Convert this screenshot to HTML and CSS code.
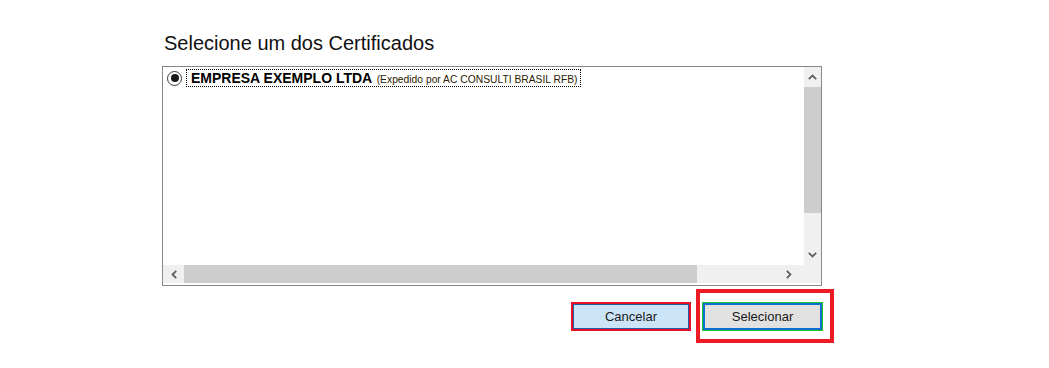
FILE: index.html
```html
<!DOCTYPE html>
<html lang="pt-BR">
<head>
  <meta charset="UTF-8" />
  <title>Certificados</title>
  <link rel="stylesheet" href="styles.css">
</head>
<body>
  <div class="page">
    <h1 class="title">Selecione um dos Certificados</h1>

    <div class="cert-box">
      <div class="cert-list">
        <label class="cert-item">
          <span class="radio"><span class="radio-dot"></span></span>
          <span class="cert-name"><b>EMPRESA EXEMPLO LTDA</b> <small>(Expedido por AC CONSULTI BRASIL RFB)</small></span>
        </label>
      </div>

      <div class="vscroll">
        <div class="sb-btn sb-up">
          <svg width="9" height="6" viewBox="0 0 9 6"><polyline points="0.8,5.2 4.5,1.5 8.2,5.2" /></svg>
        </div>
        <div class="sb-thumb vthumb"></div>
        <div class="sb-track"></div>
        <div class="sb-btn sb-down">
          <svg width="9" height="6" viewBox="0 0 9 6"><polyline points="0.8,0.8 4.5,4.5 8.2,0.8" /></svg>
        </div>
      </div>

      <div class="hscroll">
        <div class="sb-btn sb-left">
          <svg width="6" height="9" viewBox="0 0 6 9"><polyline points="5.2,0.8 1.5,4.5 5.2,8.2" /></svg>
        </div>
        <div class="sb-thumb hthumb"></div>
        <div class="sb-track"></div>
        <div class="sb-btn sb-right">
          <svg width="6" height="9" viewBox="0 0 6 9"><polyline points="0.8,0.8 4.5,4.5 0.8,8.2" /></svg>
        </div>
        <div class="sb-corner"></div>
      </div>
    </div>

    <div class="actions">
      <button class="btn btn-cancel">Cancelar</button>
      <div class="highlight">
        <button class="btn btn-select">Selecionar</button>
        <span class="highlight-box"></span>
      </div>
    </div>
  </div>
</body>
</html>
```

FILE: styles.css
```css
html, body {
  height: 100%;
}
body {
  margin: 0;
  background: #fff;
  font-family: "Liberation Sans", Arial, sans-serif;
  color: #000;
}
.page {
  width: 660px;
  margin-left: 162px;
  padding: 31px 0 30px;
}
.title {
  margin: 0 0 11px 2px;
  font-size: 20px;
  line-height: 24px;
  font-weight: normal;
  color: #111;
}

/* lista de certificados */
.cert-box {
  height: 217px;
  border: 1px solid #828790;
  display: grid;
  grid-template-columns: 641px 17px;
  grid-template-rows: 198px 18px;
  padding-bottom: 1px;
  box-sizing: content-box;
}
.cert-list {
  padding: 2px 0 0 4px;
}
.cert-item {
  display: flex;
  align-items: center;
  gap: 4px;
}
.radio {
  width: 13px;
  height: 13px;
  border: 1.5px solid #3a3a3a;
  border-radius: 50%;
  display: flex;
  align-items: center;
  justify-content: center;
  background: #fff;
}
.radio-dot {
  width: 8px;
  height: 8px;
  border-radius: 50%;
  background: #1a1a1a;
}
.cert-name {
  border: 1px dotted #000;
  height: 16px;
  line-height: 16px;
  padding: 0 2px 0 4px;
  white-space: nowrap;
}
.cert-name b {
  font-size: 14px;
  color: #000;
}
.cert-name small {
  font-size: 10.3px;
  color: #2a1a00;
}

/* barras de rolagem */
.vscroll {
  display: flex;
  flex-direction: column;
  background: #f0f0f0;
}
.hscroll {
  grid-column: 1 / 3;
  display: flex;
  background: #f0f0f0;
}
.sb-btn {
  display: flex;
  align-items: center;
  justify-content: center;
  flex: none;
}
.sb-btn polyline {
  fill: none;
  stroke: #606060;
  stroke-width: 1.8;
}
.sb-up, .sb-down {
  height: 20px;
}
.sb-left {
  width: 21px;
}
.sb-right {
  width: 17px;
}
.sb-corner {
  width: 24px;
}
.sb-thumb {
  background: #cdcdcd;
  flex: none;
}
.vthumb {
  height: 126px;
}
.hthumb {
  width: 513px;
}
.sb-track {
  flex: 1;
}

/* botões */
.actions {
  display: flex;
  justify-content: flex-end;
  gap: 10px;
  margin-top: 16px;
  margin-right: -1px;
}
.btn {
  display: block;
  width: 120px;
  height: 29px;
  font-family: "Liberation Sans", Arial, sans-serif;
  font-size: 13px;
  color: #1a1a1a;
  cursor: pointer;
  box-sizing: border-box;
}
.btn-cancel {
  margin-right: 1px;
  background: #cce4f7;
  border: 2px solid #e81123;
  box-shadow: inset 0 0 0 1px #1d5fa8;
}
.btn-select {
  width: 121px;
  background: #e1e1e1;
  border: 1px solid #22cc22;
  box-shadow: inset 0 0 0 2px #0a6fd0;
}
.highlight {
  position: relative;
}
.highlight-box {
  position: absolute;
  top: -13px;
  left: -6px;
  right: -11px;
  bottom: -12px;
  border: 4px solid #ed1c24;
  pointer-events: none;
}
```
